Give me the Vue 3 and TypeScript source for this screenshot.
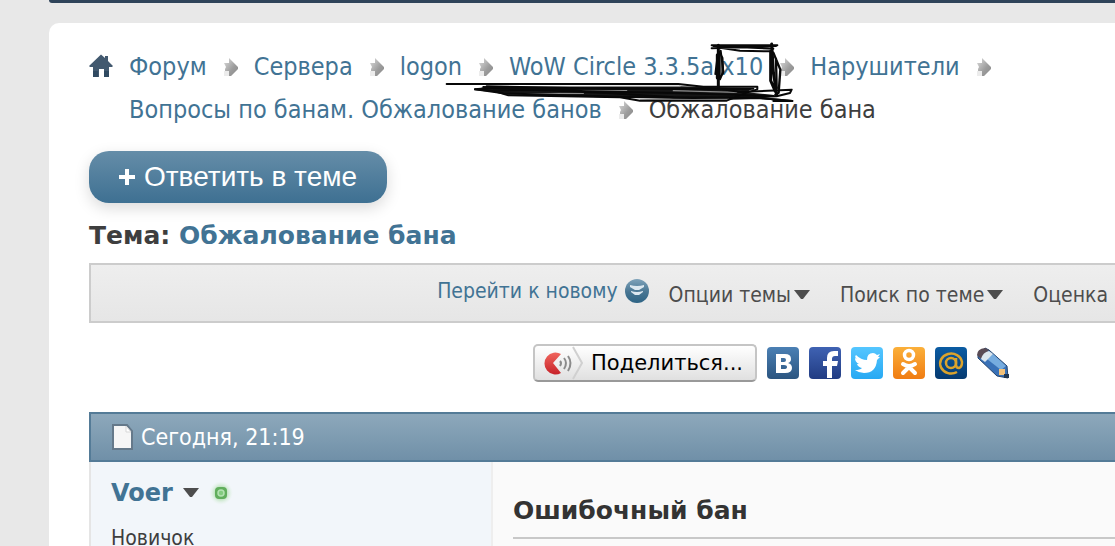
<script setup lang="ts">
interface Crumb {
  label: string
  current?: boolean
}

const crumbs: Crumb[] = [
  { label: 'Форум' },
  { label: 'Сервера' },
  { label: 'logon' },
  { label: 'WoW Circle 3.3.5a x10' },
  { label: 'Нарушители' },
  { label: 'Вопросы по банам. Обжалование банов' },
  { label: 'Обжалование бана', current: true },
]

const menus: string[] = ['Опции темы', 'Поиск по теме']
</script>

<template>
  <div class="page">
    <div class="navbar"></div>
    <main class="card">
      <nav class="breadcrumb" aria-label="Навигация">
        <a class="home" href="#" aria-label="Главная">
          <svg width="24" height="24" viewBox="0 0 24 24">
            <path d="M12 .5 16 4V2h3v5l5 5-1 1h-3v10h-5v-8h-5v8H4V13H1l-1-1z" fill="#42596f" />
            <path d="M4 17h5v6H4zM15 17h5v6h-5z" fill="#304a61" />
          </svg>
        </a>
        <ol class="crumbs">
          <li v-for="crumb in crumbs" :key="crumb.label" class="crumb">
            <span v-if="crumb.current" class="current">{{ crumb.label }}</span>
            <template v-else>
              <a href="#">{{ crumb.label }}</a>
              <svg class="arrow" width="14" height="20" viewBox="0 0 14 20" aria-hidden="true">
                <defs>
                  <linearGradient id="arrowFill" x1="0" y1="0" x2="1" y2="1">
                    <stop offset="0" stop-color="#dedede" />
                    <stop offset=".6" stop-color="#9c9c9c" />
                    <stop offset="1" stop-color="#8a8a8a" />
                  </linearGradient>
                </defs>
                <path d="M0 14h5l2 5H0z" fill="#ececec" />
                <path d="M0 6h5V1l9 9v2l-7 7H5v-5H1v-2l1-2z" fill="url(#arrowFill)" />
              </svg>
            </template>
          </li>
        </ol>
        <svg class="scribble" width="360" height="70" viewBox="0 0 1080 210" aria-hidden="true">
          <g fill="none" stroke="#080808" stroke-width="6" stroke-linecap="round" stroke-linejoin="round">
            <path d="M110 154 140 145 720 145 940 150 920 163 1010 172 960 180 560 178 200 170 160 158z" fill="#161616" stroke="none" />
            <path d="M190 146 720 145M210 168 430 166M290 157 560 158M700 158 890 163" stroke="#8a8a8a" stroke-width="4" />
            <path d="M600 184 720 180 870 182 850 188H600z" fill="#999" stroke="none" />
            <path d="M20 138H715L790 146 952 146V154L920 164 860 188H600L540 178 205 172 165 160 105 154 150 150 500 165 700 178 960 180 1057 189" />
            <path d="M105 154 190 166 560 177 760 180 940 178 1010 175 1050 165 1055 155 900 162 840 152 500 152 140 145" />
            <path d="M130 147 440 160 740 166 1000 174M160 158 500 150 800 154 940 152M870 182 960 180 1057 189H1000" />
            <path d="M815 22H1012M815 31 1008 24M830 28 900 38 990 40M820 24 1000 32" />
            <path d="M837 40 848 60 850 105 838 120z" fill="#555" stroke-width="5" />
            <path d="M835 22V148M832 50V120" stroke-width="9" />
            <path d="M832 60 826 108M842 38 850 100 840 124" />
            <path d="M995 18 1000 100 1010 172M992 40V128L1006 160" stroke-width="9" />
            <path d="M1000 44 1021 95 1016 164 1006 170M1008 62 1010 150" stroke-width="7" />
          </g>
        </svg>
      </nav>

      <button class="reply" type="button">
        <svg width="16" height="16" viewBox="0 0 16 16" aria-hidden="true">
          <path d="M6 0h4v6h6v4h-6v6H6v-6H0V6h6z" fill="#fff" />
        </svg>
        Ответить в теме
      </button>

      <h1 class="title">Тема: <a href="#">Обжалование бана</a></h1>

      <div class="toolbar">
        <a class="goto" href="#">
          Перейти к новому
          <svg width="24" height="24" viewBox="0 0 24 24" aria-hidden="true">
            <defs>
              <linearGradient id="ballFill" x1="0" y1="0" x2="0" y2="1">
                <stop offset="0" stop-color="#7fa3ba" />
                <stop offset=".55" stop-color="#477592" />
                <stop offset="1" stop-color="#2e6485" />
              </linearGradient>
            </defs>
            <circle cx="12" cy="12" r="12" fill="url(#ballFill)" />
            <path d="M5 6q7 2 14 0v2l-5 3h-4L5 8zM6 12q6 2 12 0v1l-4 3h-4l-4-3z" fill="#dce8f0" />
          </svg>
        </a>
        <button v-for="menu in menus" :key="menu" class="menu" type="button">
          {{ menu }}
          <svg width="16" height="10" viewBox="0 0 16 10" aria-hidden="true">
            <path d="M0 0h16L9 9H7z" fill="#4d4d4d" />
          </svg>
        </button>
        <button class="menu" type="button">Оценка</button>
      </div>

      <div class="share">
        <button class="share-button" type="button">
          <svg width="42" height="34" viewBox="0 0 42 34" aria-hidden="true">
            <defs>
              <linearGradient id="shareFill" x1="0" y1="0" x2="0" y2="1">
                <stop offset="0" stop-color="#f0655d" />
                <stop offset="1" stop-color="#c72229" />
              </linearGradient>
            </defs>
            <path d="M32 1 41 17 32 33" fill="none" stroke="#d0d0d0" stroke-width="2" />
            <path d="M20 8A11 11 0 1 0 20 27L12 17z" fill="url(#shareFill)" />
            <path d="M19 15q2 2 0 5M23 12q4 5 0 11M27 10q5 7 0 15" fill="none" stroke="#8b8b8b" stroke-width="2" />
          </svg>
          Поделиться...
        </button>
        <a class="social vk" href="#" aria-label="ВКонтакте">
          <svg width="32" height="32" viewBox="0 0 32 32">
            <path fill-rule="evenodd" d="M9 7h9q6 0 6 5 0 3-3 4 4 1 4 5 0 5-7 5H9zM14 11v4h3q2 0 2-2t-2-2zM14 18v4h3q3 0 3-2t-3-2z" fill="#fff" />
          </svg>
        </a>
        <a class="social facebook" href="#" aria-label="Facebook">
          <svg width="32" height="32" viewBox="0 0 32 32">
            <path d="M18 31V19h-4v-5h4v-3q0-7 7-7h4v5h-3q-3 0-3 3v2h6l-1 5h-5v12z" fill="#fff" />
          </svg>
        </a>
        <a class="social twitter" href="#" aria-label="Twitter">
          <svg width="32" height="32" viewBox="0 0 32 32">
            <path d="M5 8q5 5 11 5 0-7 6-7 2 0 4 2l3-1-2 3 2 0-3 3Q25 26 13 26 8 26 4 23q5 0 7-2-4-1-5-4h2Q4 15 4 11l2 1Q3 10 5 8z" fill="#fff" />
          </svg>
        </a>
        <a class="social ok" href="#" aria-label="Одноклассники">
          <svg width="32" height="32" viewBox="0 0 32 32">
            <circle cx="16" cy="8" r="4.500" fill="none" stroke="#fff" stroke-width="3.500" />
            <path d="M10 17q6 4 12 0M10 26l6-6 6 6" fill="none" stroke="#fff" stroke-width="4" stroke-linecap="round" />
          </svg>
        </a>
        <a class="social mail" href="#" aria-label="Mail.ru">
          <svg width="32" height="32" viewBox="0 0 32 32">
            <circle cx="16" cy="16" r="5" fill="none" stroke="#dba32c" stroke-width="2.500" />
            <path d="M21 11v7q0 3 3 3 3-1 3-6A11 10 0 1 0 22 25" fill="none" stroke="#dba32c" stroke-width="2.500" />
          </svg>
        </a>
        <a class="social pencil" href="#" aria-label="Дневник">
          <svg width="32" height="32" viewBox="0 0 32 32">
            <path d="M1 8 8 1 12 3 30 19 31 31 20 29 1 11z" fill="#3971b7" stroke="#24446e" stroke-width="1" />
            <path d="M10 12 16 7 29 19 24 23z" fill="#76acdf" />
            <path d="M0 8Q0 2 8 1L12 3 4 12z" fill="#594b55" />
            <path d="M4 12Q6 5 12 4L16 7 8 15z" fill="#dbe6ee" />
            <path d="M22 22h6v6h-6z" fill="#f3c179" />
            <path d="M27 27h5v4h-5z" fill="#213650" />
          </svg>
        </a>
      </div>

      <article class="post">
        <header class="post-head">
          <svg width="23" height="27" viewBox="0 0 23 27" aria-hidden="true">
            <path d="M2 1h14l5 6v18H2z" fill="#f6f6f6" stroke="#65798a" stroke-width="2" />
            <path d="M15 2v6h5z" fill="#fff" stroke="#d7d7d7" stroke-width="1" />
          </svg>
          Сегодня, 21:19
        </header>
        <div class="post-body">
          <aside class="author">
            <div class="author-line">
              <a class="author-name" href="#">Voer</a>
              <svg width="16" height="10" viewBox="0 0 16 10" aria-hidden="true">
                <path d="M0 0h16L9 9H7z" fill="#4d4d4d" />
              </svg>
              <svg width="24" height="24" viewBox="0 0 24 24" aria-hidden="true">
                <defs>
                  <radialGradient id="glow">
                    <stop offset=".4" stop-color="#a9dba6" />
                    <stop offset="1" stop-color="#e4f3e6" stop-opacity="0" />
                  </radialGradient>
                </defs>
                <circle cx="12" cy="12" r="12" fill="url(#glow)" />
                <rect x="6" y="6" width="12" height="12" rx="4" fill="#61ae5c" />
                <circle cx="12" cy="12" r="3" fill="#83cc7f" stroke="#b4e2b1" stroke-width="1.500" />
              </svg>
            </div>
            <div class="rank">Новичок</div>
          </aside>
          <section class="content">
            <h2 class="post-title">Ошибочный бан</h2>
          </section>
        </div>
      </article>
    </main>
  </div>
</template>

<style>
body {
  margin: 0;
  background: #e8e8e8;
}
</style>

<style scoped>
.page {
  box-sizing: border-box;
  height: 100vh;
  overflow: hidden;
  padding-left: 49px;
  display: flex;
  flex-direction: column;
  background: #e8e8e8;
  color: #3e3e3e;
  font-family: "DejaVu Sans Condensed", "DejaVu Sans", sans-serif;
}
a {
  color: #417394;
  text-decoration: none;
}
button {
  font-family: inherit;
  cursor: pointer;
}
svg {
  display: block;
  flex: none;
}
.navbar {
  flex: none;
  height: 3px;
  background: #2f445a;
  border-bottom-left-radius: 8px;
}
.card {
  flex: 1 0 auto;
  margin-top: 20px;
  padding: 22px 0 0 40px;
  background: #fff;
  border-top-left-radius: 10px;
}
.breadcrumb {
  position: relative;
  display: flex;
  gap: 16px;
  font-size: 25px;
}
.home {
  padding-top: 9px;
}
.crumbs {
  margin: 0;
  padding: 0;
  list-style: none;
  display: flex;
  flex-wrap: wrap;
  column-gap: 16px;
}
.crumb {
  display: flex;
  align-items: center;
  gap: 17px;
  line-height: 43px;
  white-space: nowrap;
}
.scribble {
  position: absolute;
  left: 351px;
  top: -7px;
}
.reply {
  margin: 20px 0 0;
  height: 52px;
  padding: 0 30px;
  display: flex;
  align-items: center;
  gap: 9px;
  border: 0;
  border-radius: 20px;
  background: linear-gradient(#658da8, #3e7092);
  box-shadow: 0 5px 15px rgba(0, 0, 0, 0.15);
  color: #fff;
  font-family: "Liberation Sans", Arial, sans-serif;
  font-size: 28px;
}
.title,
.post-title,
.author-name {
  font-family: "DejaVu Sans", Verdana, sans-serif;
  font-weight: bold;
}
.title {
  margin: 12px 0 7px;
  font-size: 25px;
  line-height: 41px;
}
.toolbar {
  box-sizing: border-box;
  height: 60px;
  padding-right: 7px;
  display: flex;
  justify-content: flex-end;
  align-items: center;
  border: 2px solid #ccc;
  border-right: 0;
  background: linear-gradient(#eee, #e6e6e6);
  font-size: 21px;
  white-space: nowrap;
}
.goto {
  display: flex;
  align-items: center;
  gap: 7px;
  margin-right: 20px;
  padding-bottom: 4px;
}
.menu {
  display: flex;
  align-items: center;
  gap: 3px;
  padding: 3px 0 0;
  margin-left: 30px;
  border: 0;
  background: none;
  color: #4d4d4d;
  font-size: 21px;
}
.goto + .menu {
  margin-left: 0;
}
.share {
  margin-top: 21px;
  padding-right: 106px;
  display: flex;
  justify-content: flex-end;
  align-items: center;
  gap: 10px;
}
.share-button {
  box-sizing: border-box;
  height: 38px;
  padding: 0 12px 0 6px;
  display: flex;
  align-items: center;
  gap: 8px;
  border: 2px solid #c5c5c5;
  border-bottom-color: #999;
  border-radius: 5px;
  background: linear-gradient(#fff, #e0e0e0);
  color: #000;
  font-family: "DejaVu Sans", Verdana, sans-serif;
  font-size: 21px;
}
.social {
  border-radius: 4px;
}
.vk {
  background: linear-gradient(#4b80b4, #2b5580);
}
.facebook {
  background: linear-gradient(#3f62b3, #213c83);
}
.twitter {
  background: linear-gradient(#55c6ff, #27a9f3);
}
.ok {
  background: linear-gradient(#fbb03a, #f07c12);
}
.mail {
  background: linear-gradient(#0b5ca3, #063a70);
}
.post {
  margin-top: 30px;
}
.post-head {
  box-sizing: border-box;
  height: 50px;
  padding: 0 20px;
  display: flex;
  align-items: center;
  gap: 7px;
  border: 2px solid #547b97;
  border-right: 0;
  background: linear-gradient(#8da8bb, #7090a8);
  color: #fff;
  font-size: 23px;
}
.post-body {
  display: flex;
  min-height: 120px;
  border-left: 2px solid #e5e5e5;
}
.author {
  box-sizing: border-box;
  flex: none;
  width: 402px;
  padding: 14px 20px 0;
  border-right: 2px solid #eee;
  background: #f2f6fa;
}
.author-line {
  display: flex;
  align-items: center;
  gap: 10px;
  line-height: 34px;
}
.author-name {
  font-size: 24px;
}
.rank {
  margin-top: 14px;
  font-size: 21px;
  line-height: 28px;
}
.content {
  flex: 1;
  padding: 29px 0 0 20px;
  background: #fafafa;
}
.post-title {
  margin: 0;
  padding-bottom: 6px;
  border-bottom: 2px solid #c8c8c8;
  color: #333;
  font-size: 25px;
  line-height: 40px;
}
</style>
